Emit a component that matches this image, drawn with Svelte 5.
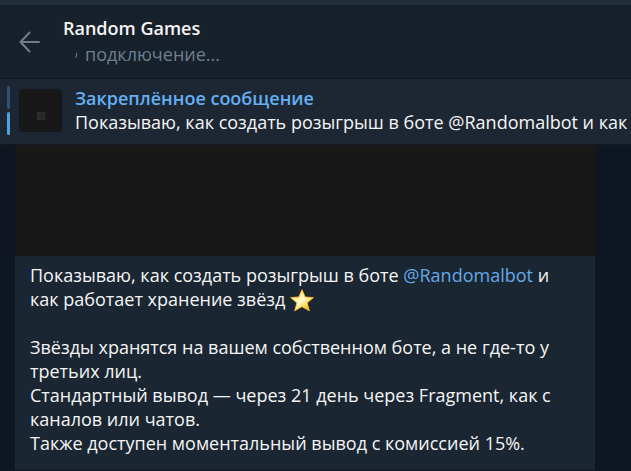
<script>
    const chat = {
        title: 'Random Games',
        status: 'подключение...'
    };

    const pinned = {
        label: 'Закреплённое сообщение',
        text: 'Показываю, как создать розыгрыш в боте @Randomalbot и как работает хранение звёзд'
    };

    const paragraphs = [
        'Звёзды хранятся на вашем собственном боте, а не где-то у третьих лиц.',
        'Стандартный вывод — через 21 день через Fragment, как с каналов или чатов.',
        'Также доступен моментальный вывод с комиссией 15%.'
    ];

    let activePin = $state(1);

    function nextPin() {
        activePin = (activePin + 1) % 2;
    }
</script>

<main>
    <div class="titlebar"></div>

    <header>
        <button class="back" aria-label="Назад">
            <svg width="22" height="22" viewBox="0 0 22 22">
                <path d="M20 11H1.5M10.5 1.5L1.5 11L10.5 20.5" />
            </svg>
        </button>
        <div class="info">
            <h1>{chat.title}</h1>
            <p class="status">
                <svg width="22" height="20" viewBox="0 0 22 20">
                    <path d="M13.5 9V11L12.5 14" />
                </svg>
                {chat.status}
            </p>
        </div>
    </header>

    <button class="pinned" onclick={nextPin}>
        <span class="marks">
            {#each [0, 1] as index}
                <span class="mark" class:active={index === activePin}></span>
            {/each}
        </span>
        <span class="thumb">
            <svg width="43" height="43" viewBox="0 0 43 43">
                <path d="M18 23h4v4h-4zM22.5 23h3.5v4h-3.5zM18 27.5h4v3.5h-4zM22.5 27.5h3.5v3.5h-3.5z" />
            </svg>
        </span>
        <span class="pinned-text">
            <span class="label">{pinned.label}</span>
            <span class="excerpt">{pinned.text}</span>
        </span>
    </button>

    <section class="history">
        <article>
            <div class="media"></div>
            <div class="text">
                <p class="lead">
                    Показываю, как создать розыгрыш в боте <a href="#randomalbot">@Randomalbot</a> и как работает хранение звёзд
                    <svg class="star" role="img" aria-label="звезда" width="24" height="24" viewBox="0 0 24 24">
                        <defs>
                            <linearGradient id="gold" x1="0" y1="0" x2="1" y2="1">
                                <stop offset="0" stop-color="#ffc93c" />
                                <stop offset="0.3" stop-color="#fff0a0" />
                                <stop offset="0.5" stop-color="#fff8c8" />
                                <stop offset="0.7" stop-color="#ffd95a" />
                                <stop offset="1" stop-color="#e88a18" />
                            </linearGradient>
                        </defs>
                        <path
                            d="M12 0.8L15.1 8L23.3 8.6L17.1 13.9L19.3 21.8L12 17.6L4.7 21.8L6.9 13.9L0.7 8.6L8.9 8Z"
                            fill="url(#gold)"
                            stroke="#f8b936"
                            stroke-width="1"
                            stroke-linejoin="round"
                        />
                    </svg>
                </p>
                {#each paragraphs as paragraph}
                    <p>{paragraph}</p>
                {/each}
            </div>
        </article>
    </section>
</main>

<style>
    :global(body) {
        margin: 0;
        background: #0e1621;
    }

    main {
        display: flex;
        flex-direction: column;
        min-height: 100vh;
        overflow: hidden;
        background: #0e1621;
        color: #f5f5f5;
        font-family: 'Open Sans', 'Noto Sans', sans-serif;
        font-size: 18px;
        line-height: 24px;
    }

    h1,
    p {
        margin: 0;
    }

    button {
        border: 0;
        padding: 0;
        background: none;
        color: inherit;
        font: inherit;
        text-align: left;
        cursor: pointer;
    }

    .titlebar {
        height: 5px;
        background: #242f3d;
    }

    header {
        display: flex;
        align-items: center;
        gap: 22px;
        padding: 11px 19px;
        background: #17212b;
        border-bottom: 1px solid #121a23;
    }

    .back {
        display: flex;
    }

    .back svg {
        fill: none;
        stroke: #737c85;
        stroke-width: 2;
        stroke-linecap: round;
        stroke-linejoin: round;
    }

    h1 {
        font-size: 18px;
        font-weight: 600;
        line-height: 24px;
    }

    .status {
        display: flex;
        align-items: center;
        height: 26px;
        padding-top: 1px;
        color: #6d7f8f;
    }

    .status svg {
        fill: none;
        stroke: #6d7f8f;
    }

    .pinned {
        display: flex;
        align-items: center;
        height: 66px;
        padding: 0 0 2px 7px;
        box-sizing: border-box;
        background: #1d2733;
        border-bottom: 1px solid #121a23;
    }

    .marks {
        display: flex;
        flex-direction: column;
        gap: 3px;
        margin-right: 9px;
    }

    .mark {
        width: 3px;
        height: 23px;
        border-radius: 2px;
        background: #2e5372;
    }

    .mark.active {
        background: #4ba3e2;
    }

    .thumb {
        display: flex;
        margin-right: 13px;
        border-radius: 4px;
        background: #181818;
    }

    .thumb svg {
        fill: #2d2d2d;
    }

    .pinned-text {
        display: flex;
        flex: 1;
        flex-direction: column;
        min-width: 0;
        padding-bottom: 2px;
    }

    .label {
        color: #64b0f2;
        font-weight: 600;
    }

    .excerpt {
        overflow: hidden;
        white-space: nowrap;
    }

    .history {
        flex: 1;
        padding: 0 36px 1px 15px;
    }

    article {
        background: #1a2632;
    }

    .media {
        height: 111px;
        background: #181818;
    }

    .text {
        padding: 7px 15px 15px;
    }

    .lead {
        margin-bottom: 24px;
    }

    .star {
        margin: -4px 0;
        vertical-align: middle;
    }

    a {
        color: #64a9e8;
        text-decoration: none;
    }
</style>
